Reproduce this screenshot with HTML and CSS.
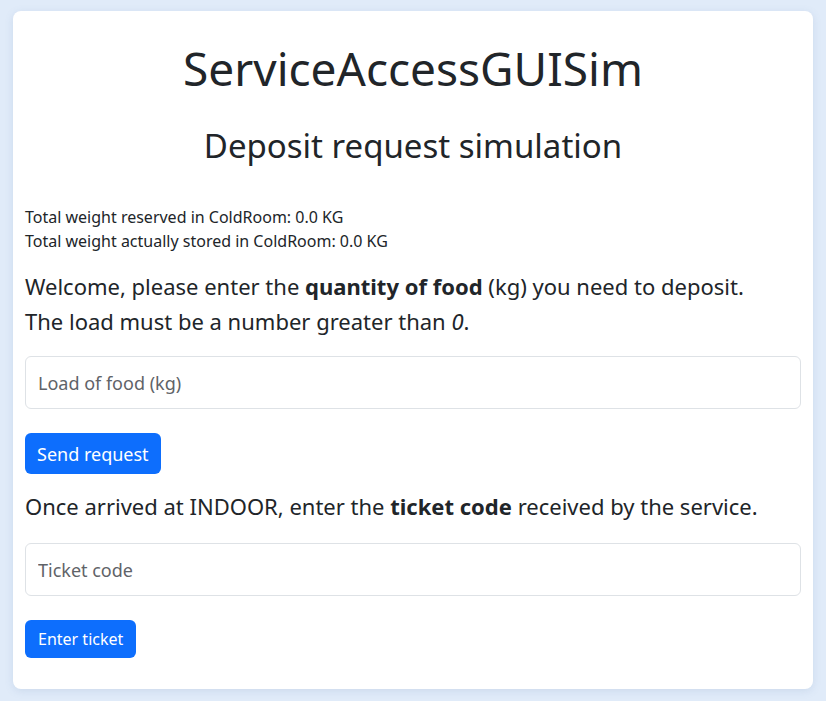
FILE: index.html
```html
<!DOCTYPE html>
<html lang="en">
<head>
<meta charset="utf-8">
<title>ServiceAccessGUISim</title>
<link rel="stylesheet" href="styles.css">
</head>
<body>
<main class="card">
  <h1 class="title">ServiceAccessGUISim</h1>
  <h2 class="subtitle">Deposit request simulation</h2>
  <div class="stats">
    <div>Total weight reserved in ColdRoom: 0.0 KG</div>
    <div>Total weight actually stored in ColdRoom: 0.0 KG</div>
  </div>
  <p class="lead">Welcome, please enter the <b>quantity of food</b> (kg) you need to deposit.<br>The load must be a number greater than <i>0</i>.</p>
  <input class="field field-first" type="text" placeholder="Load of food (kg)">
  <button class="btn btn-lg" type="button">Send request</button>
  <p class="lead lead-second">Once arrived at INDOOR, enter the <b>ticket code</b> received by the service.</p>
  <input class="field" type="text" placeholder="Ticket code">
  <button class="btn" type="button">Enter ticket</button>
</main>
</body>
</html>
```
FILE: styles.css
```css
* { box-sizing: border-box; }
html, body { margin: 0; }
body {
  background: #e0ebf9;
  font-family: "Noto Sans", "Open Sans", sans-serif;
  color: #212529;
  padding: 11px 13px 13px;
}
.card {
  max-width: 800px;
  margin: 0 auto;
  background: #fff;
  border-radius: 8px;
  box-shadow: 0 2px 8px rgba(90, 120, 170, 0.15);
  padding: 20px 12px 31px;
  display: flex;
  flex-direction: column;
  align-items: flex-start;
}
.title {
  align-self: stretch;
  text-align: center;
  font-size: 46px;
  font-weight: 400;
  line-height: 55px;
  margin: 10px 0 0;
}
.subtitle {
  align-self: stretch;
  text-align: center;
  font-size: 33px;
  font-weight: 400;
  line-height: 40px;
  margin: 30px 0 0;
}
.stats {
  margin-top: 39px;
  font-size: 16px;
  line-height: 24px;
}
.lead {
  font-size: 22px;
  line-height: 35px;
  margin: 16px 0 0;
}
.lead-second { margin-top: 15px; }
.field {
  align-self: stretch;
  margin-top: 19px;
  height: 53px;
  border: 1px solid #dee2e6;
  border-radius: 6px;
  padding: 0 12px;
  font-family: inherit;
  font-size: 18px;
  color: #212529;
  background: #fff;
}
.field-first { margin-top: 17px; }
.field::placeholder { color: #5f6368; }
.btn {
  margin-top: 24px;
  background: #0d6efd;
  color: #fff;
  border: 0;
  border-radius: 6px;
  font-family: inherit;
  font-size: 16px;
  height: 38px;
  padding: 0 13px;
  cursor: pointer;
}
.btn-lg {
  font-size: 18px;
  height: 41px;
  padding: 0 12px;
}
```
